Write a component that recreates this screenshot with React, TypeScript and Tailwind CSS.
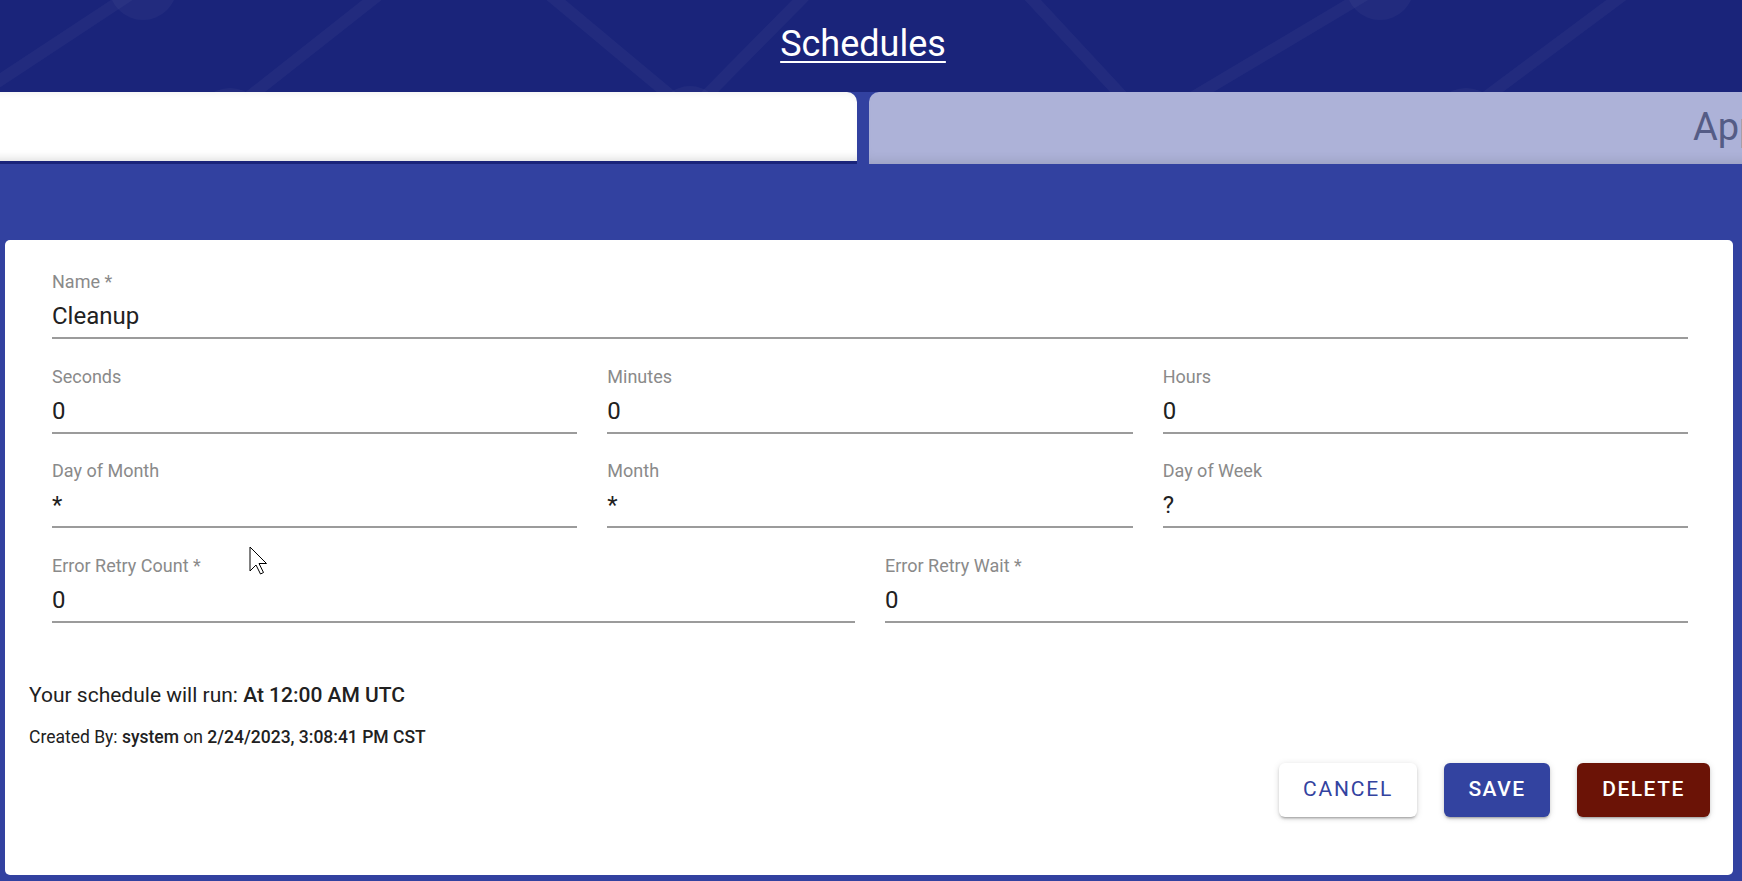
const rows: { label: string; value: string }[][] = [
  [{ label: 'Name *', value: 'Cleanup' }],
  [
    { label: 'Seconds', value: '0' },
    { label: 'Minutes', value: '0' },
    { label: 'Hours', value: '0' },
  ],
  [
    { label: 'Day of Month', value: '*' },
    { label: 'Month', value: '*' },
    { label: 'Day of Week', value: '?' },
  ],
  [
    { label: 'Error Retry Count *', value: '0' },
    { label: 'Error Retry Wait *', value: '0' },
  ],
];

const gridCols: Record<number, string> = {
  1: 'grid-cols-1',
  2: 'grid-cols-2',
  3: 'grid-cols-3',
};

const btnShadow =
  'shadow-[0_3px_2px_-2px_rgba(0,0,0,0.2),0_2px_3px_0_rgba(0,0,0,0.14),0_1px_7px_0_rgba(0,0,0,0.12)]';

function HeaderPattern() {
  return (
    <svg className="absolute inset-0 w-full h-full" viewBox="0 0 1742 92" preserveAspectRatio="none">
      <g stroke="#ffffff" strokeOpacity="0.035" strokeWidth="12" fill="none" strokeLinecap="round">
        <line x1="-30" y1="100" x2="143" y2="-14" />
        <line x1="230" y1="112" x2="410" y2="-30" />
        <line x1="520" y1="-30" x2="690" y2="112" />
        <line x1="690" y1="112" x2="840" y2="-40" />
        <line x1="1005" y1="-30" x2="1135" y2="110" />
        <line x1="1180" y1="105" x2="1380" y2="-14" />
        <line x1="1466" y1="112" x2="1670" y2="-40" />
      </g>
      <g fill="#ffffff" fillOpacity="0.035">
        <circle cx="143" cy="-14" r="34" />
        <circle cx="230" cy="122" r="34" />
        <circle cx="690" cy="118" r="32" />
        <circle cx="1380" cy="-14" r="34" />
        <circle cx="1466" cy="122" r="34" />
      </g>
    </svg>
  );
}

function Field({ label, value }: { label: string; value: string }) {
  return (
    <div className="flex flex-col">
      <span className="text-[18px] leading-[21px] text-[#8a8a8a]">{label}</span>
      <div className="mt-[10px] pb-[7px] border-b-2 border-[#9b9b9b] text-[24px] leading-[28px] text-[#212121]">
        {value}
      </div>
    </div>
  );
}

export default function App() {
  return (
    <div className="w-[1742px] h-[881px] overflow-hidden bg-[#3241a0] font-['Roboto',sans-serif]">
      <header className="relative h-[92px] bg-[#1a247a] flex items-center justify-center pr-[16px] pb-[4px] overflow-hidden">
        <HeaderPattern />
        <a className="relative text-[36px] leading-[36px] text-white underline underline-offset-[5px] decoration-2">
          Schedules
        </a>
      </header>

      <div className="flex gap-[12px] h-[72px] overflow-hidden">
        <div className="shrink-0 w-[897px] -ml-[40px] rounded-t-[10px] bg-white border-b-[3px] border-[#1a247a] shadow-[inset_0_-8px_10px_-6px_rgba(0,0,0,0.14),inset_0_8px_10px_-8px_rgba(0,0,0,0.08)]" />
        <div className="shrink-0 w-[1000px] rounded-t-[10px] bg-[#adb2d8] shadow-[inset_0_-10px_12px_-8px_rgba(0,0,0,0.12)] pl-[824px] pt-[12px] text-[38px] leading-[46px] text-[#555c86] whitespace-nowrap">
          Applications
        </div>
      </div>

      <div className="h-[76px]" />

      <main className="relative ml-[5px] mr-[9px] h-[635px] bg-white rounded-[5px] pl-[24px] pr-[23px] pt-[31px]">
        <div className="flex flex-col gap-y-[26.5px] pl-[23px] pr-[22px]">
          {rows.map((row, i) => (
            <div key={i} className={`grid ${gridCols[row.length]} gap-x-[30px]`}>
              {row.map((f) => (
                <Field key={f.label} label={f.label} value={f.value} />
              ))}
            </div>
          ))}
        </div>

        <p className="mt-[60px] text-[21px] leading-[24px] text-[#212121]">
          Your schedule will run: <span className="font-medium">At 12:00 AM UTC</span>
        </p>
        <p className="mt-[20px] text-[17.5px] leading-[20px] text-[#212121]">
          Created By: <span className="font-medium">system</span> on{' '}
          <span className="font-medium">2/24/2023, 3:08:41 PM CST</span>
        </p>

        <div className="mt-[16px] flex justify-end gap-[27px]">
          <button className={`w-[138px] h-[54px] rounded-[6px] bg-white text-[#3343a0] text-[21px] font-normal tracking-[1.8px] ${btnShadow}`}>
            CANCEL
          </button>
          <button className={`w-[106px] h-[54px] rounded-[6px] bg-[#3343a0] text-white text-[21px] font-medium tracking-[1.5px] ${btnShadow}`}>
            SAVE
          </button>
          <button className={`w-[133px] h-[54px] rounded-[6px] bg-[#6b1306] text-white text-[21px] font-medium tracking-[1.5px] ${btnShadow}`}>
            DELETE
          </button>
        </div>

        {/* mouse pointer captured in the screenshot */}
        <svg className="absolute left-[244px] top-[306px]" width="19" height="29" viewBox="0 0 19 29">
          <path
            d="M1 1 L1 25 L7 19 L11.5 28 L14.5 26.5 L10 17.5 L17.5 17.5 Z"
            fill="#ffffff"
            stroke="#000000"
            strokeWidth="1"
            strokeLinejoin="miter"
          />
        </svg>
      </main>
    </div>
  );
}
